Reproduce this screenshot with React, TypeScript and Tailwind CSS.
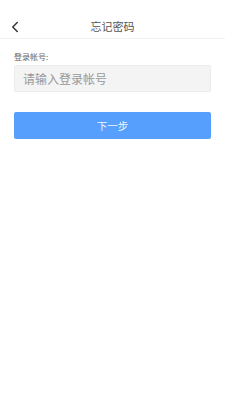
import { ChevronLeft } from 'lucide-react';

const App = () => {
  return (
    <div className="min-h-[400px] w-full bg-white font-['Noto_Sans_CJK_SC',sans-serif]">
      <div className="relative flex h-[39px] items-center justify-center border-b border-[#f2f2f2] pt-[15px]">
        <button className="absolute left-[6px] top-[18px] text-[#333]">
          <ChevronLeft size={18} strokeWidth={2} />
        </button>
        <span className="text-[11px] text-[#555]">忘记密码</span>
      </div>

      <div className="px-[14px] pt-[13px]">
        <label className="block text-[8px] leading-[10px] text-[#666]">登录帐号:</label>
        <div className="mt-[3px] flex h-[27px] items-center rounded-[2px] border border-[#ececec] bg-[#f4f4f4] px-[8px]">
          <span className="text-[12px] text-[#999]">请输入登录帐号</span>
        </div>

        <button className="mt-[20px] flex h-[27px] w-full items-center justify-center rounded-[2px] bg-[#579ffc] text-[10.5px] text-[#eef5ff]">
          下一步
        </button>
      </div>
    </div>
  );
};

export default App;
